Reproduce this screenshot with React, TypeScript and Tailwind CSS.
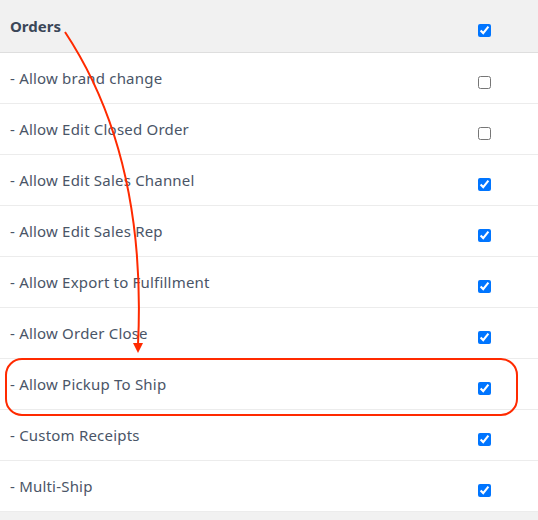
import React from "react";

const rows: { label: string; checked: boolean }[] = [
  { label: "- Allow brand change", checked: false },
  { label: "- Allow Edit Closed Order", checked: false },
  { label: "- Allow Edit Sales Channel", checked: true },
  { label: "- Allow Edit Sales Rep", checked: true },
  { label: "- Allow Export to Fulfillment", checked: true },
  { label: "- Allow Order Close", checked: true },
  { label: "- Allow Pickup To Ship", checked: true },
  { label: "- Custom Receipts", checked: true },
  { label: "- Multi-Ship", checked: true },
];

export default function App() {
  return (
    <div
      className="relative w-[538px] h-[520px] bg-[#f1f1f1] overflow-hidden"
      style={{ fontFamily: '"Noto Sans", "Open Sans", sans-serif' }}
    >
      <div className="flex h-[53px] items-center border-b border-[#dedede] bg-[#f1f1f1]">
        <div className="flex-1 pl-[10px] text-[15px] font-bold text-[#3b4758]">Orders</div>
        <div className="flex w-[107px] justify-center">
          <input type="checkbox" defaultChecked className="mt-2 h-[13px] w-[13px]" />
        </div>
      </div>
      {rows.map((r) => (
        <div key={r.label} className="flex h-[51px] items-center border-b border-[#ececec] bg-white">
          <div className="flex-1 pl-[10px] text-[15px] tracking-[0.2px] text-[#4a5567]">{r.label}</div>
          <div className="flex w-[107px] justify-center">
            <input type="checkbox" defaultChecked={r.checked} className="mt-2 h-[13px] w-[13px]" />
          </div>
        </div>
      ))}
      <svg className="pointer-events-none absolute left-0 top-0" width="538" height="520">
        <path d="M65 32 C 110 100, 145 200, 138 345" fill="none" stroke="#ff2a00" strokeWidth="2" />
        <polygon points="133,343 143,343 138,353" fill="#ff2a00" />
        <rect x="6" y="359" width="511" height="56" rx="16" fill="none" stroke="#ff2a00" strokeWidth="2" />
      </svg>
    </div>
  );
}
